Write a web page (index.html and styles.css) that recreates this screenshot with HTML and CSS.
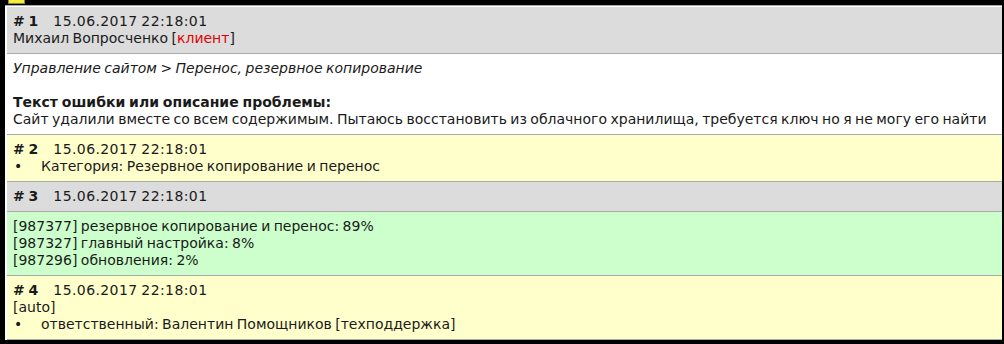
FILE: index.html
```html
<!DOCTYPE html>
<html lang="ru">

<head>
    <meta charset="UTF-8">
    <title>Заявка</title>
    <link rel="stylesheet" href="styles.css">
</head>

<body>

    <div class="tab"></div>

    <div class="sheet">
        <div class="post head">
            <div><b class="num"># 1</b><span class="date">15.06.2017 22:18:01</span></div>
            <div>Михаил Вопросченко [<span class="role">клиент</span>]</div>
        </div>
        <div class="post plain">
            <div class="path">Управление сайтом &gt; Перенос, резервное копирование</div>
            <div class="gap"></div>
            <div><b>Текст ошибки или описание проблемы:</b></div>
            <div>Сайт удалили вместе со всем содержимым. Пытаюсь восстановить из облачного хранилища, требуется ключ но я не могу его найти</div>
        </div>

        <div class="post note">
            <div><b class="num"># 2</b><span class="date">15.06.2017 22:18:01</span></div>
            <ul class="items">
                <li>Категория: Резервное копирование и перенос</li>
            </ul>
        </div>

        <div class="post head">
            <div><b class="num"># 3</b><span class="date">15.06.2017 22:18:01</span></div>
        </div>
        <div class="post guess">
            <div>[987377] резервное копирование и перенос: 89%</div>
            <div>[987327] главный настройка: 8%</div>
            <div>[987296] обновления: 2%</div>
        </div>

        <div class="post note">
            <div><b class="num"># 4</b><span class="date">15.06.2017 22:18:01</span></div>
            <div>[auto]</div>
            <ul class="items">
                <li>ответственный: Валентин Помощников [техподдержка]</li>
            </ul>
        </div>
    </div>

</body>

</html>
```

FILE: styles.css
```css
body {
    margin: 0;
    background: #000;
    font-family: "DejaVu Sans", Verdana, sans-serif;
    font-size: 14px;
    line-height: 17px;
    word-spacing: -1px;
    color: #1a1a1a;
}

.tab {
    width: 15px;
    height: 3px;
    margin-left: 8px;
    background: #f4ee3a;
    border: 1px solid #8a8a30;
    border-top: none;
    margin-bottom: 1px;
}

.sheet {
    margin: 0 2px 0 5px;
    padding: 1px 0 0 2px;
    background: #fff;
    border-top: 1px solid #aaa;
}

.post {
    padding: 6px 6px 6px 6px;
    border-bottom: 1px solid #aaa;
}

.head {
    background: #dcdcdc;
}

.plain {
    background: #fff;
}

.note {
    background: #ffffcc;
}

.guess {
    background: #ccffcc;
}

.num {
    margin-right: 15px;
}

.date {
    letter-spacing: 0.4px;
}

.role {
    color: #e00000;
}

.path {
    font-style: italic;
}

.gap {
    height: 17px;
}

.items {
    margin: 0;
    padding: 0;
    list-style: none;
}

.items li {
    padding-left: 28px;
    position: relative;
}

.items li:before {
    content: '•';
    position: absolute;
    left: 1px;
}
```
